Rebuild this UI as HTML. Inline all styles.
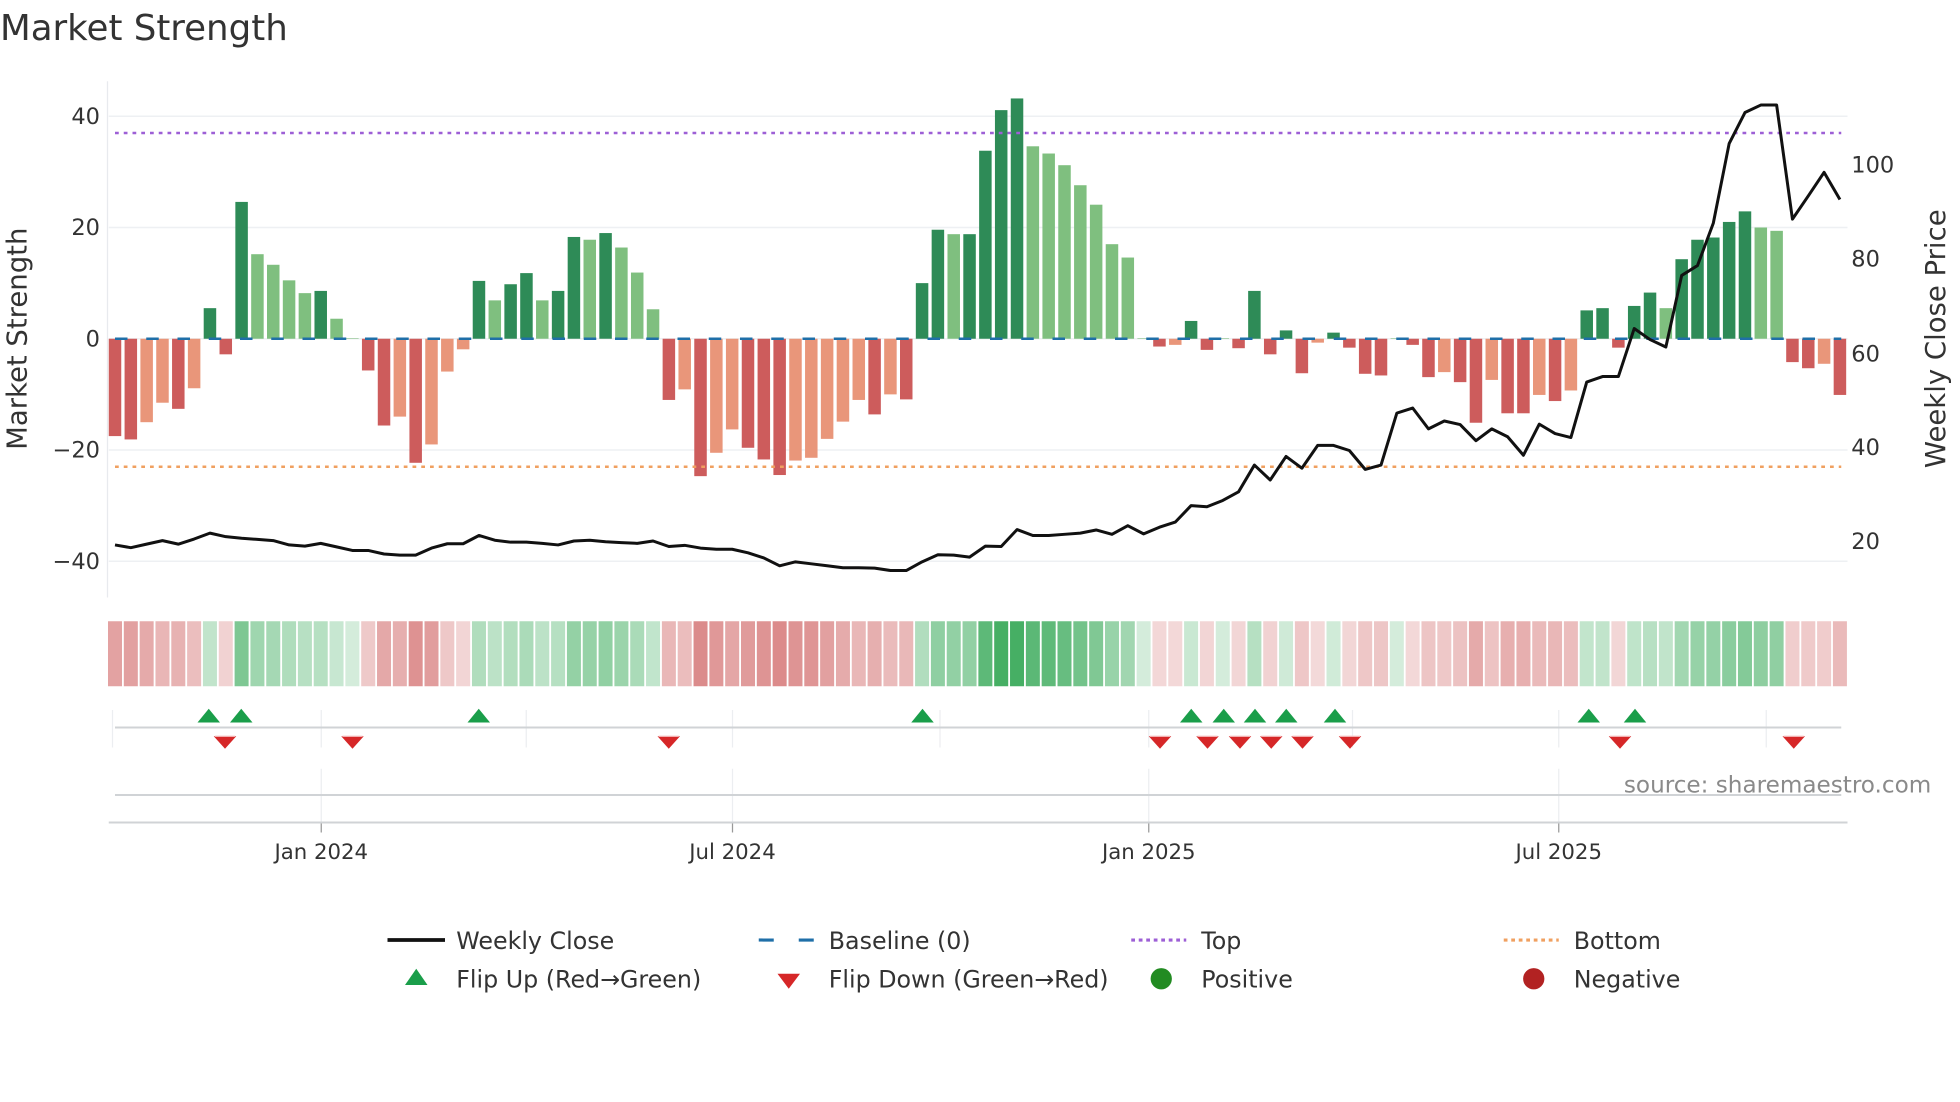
<!DOCTYPE html>
<html><head><meta charset="utf-8"><style>
html,body{margin:0;padding:0;background:#fff;}
svg{display:block;font-family:"DejaVu Sans","Liberation Sans",sans-serif;}
</style></head><body>
<svg id="s" width="1960" height="1102" viewBox="0 0 1568 881.6" xmlns="http://www.w3.org/2000/svg">
<text x="0" y="32" font-size="28.5" fill="#333">Market Strength</text>
<g id="g"></g>
</svg>
<script>
const V=[-17.5,-18.1,-15,-11.5,-12.6,-8.9,5.5,-2.8,24.6,15.2,13.3,10.5,8.2,8.6,3.6,0.1,-5.7,-15.6,-14,-22.3,-19,-5.9,-1.9,10.4,6.9,9.8,11.8,6.9,8.6,18.3,17.8,19,16.4,11.9,5.3,-11,-9.1,-24.7,-20.5,-16.3,-19.6,-21.7,-24.5,-21.9,-21.4,-18,-14.9,-11,-13.6,-10,-10.9,10,19.6,18.8,18.8,33.8,41.1,43.2,34.6,33.3,31.2,27.6,24.1,17,14.6,0.1,-1.4,-1.1,3.2,-2,0.1,-1.7,8.6,-2.8,1.5,-6.2,-0.7,1.1,-1.6,-6.3,-6.6,0.1,-1.1,-6.9,-6,-7.8,-15.1,-7.4,-13.4,-13.4,-10.1,-11.2,-9.3,5.1,5.5,-1.6,5.9,8.3,5.5,14.3,17.8,18.2,21,22.9,20,19.4,-4.2,-5.3,-4.5,-10.1];
const DK=[1,1,0,0,1,0,1,1,1,0,0,0,0,1,0,0,1,1,0,1,0,0,0,1,0,1,1,0,1,1,0,1,0,0,0,1,0,1,0,0,1,1,1,0,0,0,0,0,1,0,1,1,1,0,1,1,1,1,0,0,0,0,0,0,0,0,1,0,1,1,0,1,1,1,1,1,0,1,1,1,1,0,1,1,0,1,1,0,1,1,0,1,0,1,1,1,1,1,0,1,1,1,1,1,0,0,1,1,0,1];
const P1=[1385,1392,1383,1374,1383,1370,1355,1364,1368,1371,1374,1385,1388,1381,1390,1399,1399,1408,1411,1411,1393,1382,1382,1361,1373,1378,1378,1381,1385,1375,1373,1377,1379,1381,1375,1389,1386,1393,1396,1396,1405,1418,1438,1428,1433,1438,1443,1443,1444,1450,1450,1428,1410,1411,1416];
const P2=[1388,1389,1346,1361,1361,1358,1355,1347,1358,1336,1357,1340,1327,1285,1288,1272,1250,1182,1220,1160,1190,1132,1132,1145,1193,1182,1050,1037,1090,1070,1079,1120,1090,1110,1157,1078,1102,1112,971,957,957,835,863,882,700,675,567,365,286,267,267,557,498,438,507];
const P=P1.concat(P2).map(y=>y/3.177);
const X=i=>92+i*12.66;
const Y=v=>271-v*4.45;
let h='';
[40,20,0,-20,-40].forEach(v=>{h+=`<line x1="87" x2="1478" y1="${Y(v)}" y2="${Y(v)}" stroke="#eef0f3" stroke-width="1.2"/>`;
h+=`<text x="80" y="${Y(v)+6}" font-size="18" fill="#333" text-anchor="end">${v<0?'−'+(-v):v}</text>`;});
h+=`<line x1="86" x2="86" y1="65" y2="478" stroke="#e8eaee" stroke-width="1"/>`;
[[100,132],[80,207],[60,283],[40,358],[20,433]].forEach(a=>{h+=`<text x="1481" y="${a[1]+6}" font-size="18" fill="#333">${a[0]}</text>`;});
V.forEach((v,i)=>{const x=X(i)-5;let c;
 if(v>=0)c=DK[i]?'#2e8b57':'#7fbf7f';else c=DK[i]?'#cd5c5c':'#e9967a';
 const y0=Y(0),y1=Y(v);h+=`<rect x="${x}" y="${Math.min(y0,y1)}" width="10" height="${Math.abs(y1-y0)}" fill="${c}"/>`;});
h+=`<line x1="92" x2="1473" y1="${Y(0)}" y2="${Y(0)}" stroke="#1f6fa8" stroke-width="2" stroke-dasharray="10,15"/>`;
h+=`<line x1="92" x2="1473" y1="${Y(37)}" y2="${Y(37)}" stroke="#9d5fd6" stroke-width="2" stroke-dasharray="3,4"/>`;
h+=`<line x1="92" x2="1473" y1="${Y(-23)}" y2="${Y(-23)}" stroke="#f0a060" stroke-width="2" stroke-dasharray="3,4"/>`;
h+=`<polyline fill="none" stroke="#111" stroke-width="2.4" stroke-linejoin="round" points="${P.map((y,i)=>X(i)+','+y).join(' ')}"/>`;
V.forEach((v,i)=>{const a=Math.abs(v);let r,g,b,al;
 if(v>=0){[r,g,b]=[60,171,92];al=Math.min(0.95,0.22+0.018*a);}else{[r,g,b]=[205,92,92];al=Math.min(0.8,0.22+0.02*a);}
 const m=c=>Math.round(c*al+255*(1-al));
 h+=`<rect x="${X(i)-5.6}" y="497" width="11.2" height="52" fill="rgb(${m(r)},${m(g)},${m(b)})"/>`;});
[90,257,421,586,752,919,1082,1247,1413].forEach(x=>{h+=`<line x1="${x}" x2="${x}" y1="568" y2="598" stroke="#eceef1"/>`;});
h+=`<line x1="92" x2="1473" y1="582" y2="582" stroke="#d0d3d6" stroke-width="1.6"/>`;
[167,193,383,738,953,979,1004,1029,1068,1271,1308].forEach(x=>{h+=`<polygon points="${x-9},578 ${x+9},578 ${x},567" fill="#1a9e4a"/>`;});
[180,282,535,928,966,992,1017,1042,1080,1296,1435].forEach(x=>{h+=`<polygon points="${x-9},589 ${x+9},589 ${x},599" fill="#d62728"/><line x1="${x-8}" x2="${x+8}" y1="589" y2="589" stroke="#f6c4c4" stroke-width="1"/>`;});
[257,586,919,1247].forEach(x=>{h+=`<line x1="${x}" x2="${x}" y1="615" y2="658" stroke="#eceef1"/><line x1="${x}" x2="${x}" y1="658" y2="666" stroke="#999"/>`;});
h+=`<line x1="92" x2="1473" y1="636" y2="636" stroke="#d0d3d6" stroke-width="1.6"/>`;
h+=`<line x1="87" x2="1478" y1="658" y2="658" stroke="#d0d3d6" stroke-width="1.6"/>`;
h+=`<text x="1545" y="634" font-size="18.5" fill="#8a8a8a" text-anchor="end">source: sharemaestro.com</text>`;
[['Jan 2024',257],['Jul 2024',586],['Jan 2025',919],['Jul 2025',1247]].forEach(a=>{h+=`<text x="${a[1]}" y="687" font-size="17" fill="#333" text-anchor="middle">${a[0]}</text>`;});
h+=`<text transform="translate(21,271) rotate(-90)" font-size="22" fill="#333" text-anchor="middle">Market Strength</text>`;
h+=`<text transform="translate(1556,271) rotate(-90)" font-size="22" fill="#333" text-anchor="middle">Weekly Close Price</text>`;
const T=(x,y,s)=>`<text x="${x}" y="${y+7}" font-size="19" fill="#333">${s}</text>`;
h+=`<line x1="310" x2="356" y1="752" y2="752" stroke="#111" stroke-width="3"/>`+T(365,752,'Weekly Close');
h+=`<line x1="607" x2="651" y1="752" y2="752" stroke="#1f6fa8" stroke-width="2.5" stroke-dasharray="12,20"/>`+T(663,752,'Baseline (0)');
h+=`<line x1="905" x2="949" y1="752" y2="752" stroke="#9d5fd6" stroke-width="2.5" stroke-dasharray="3,3"/>`+T(961,752,'Top');
h+=`<line x1="1203" x2="1247" y1="752" y2="752" stroke="#f0a060" stroke-width="2.5" stroke-dasharray="3,3"/>`+T(1259,752,'Bottom');
h+=`<polygon points="324,788 342,788 333,775" fill="#1a9e4a"/>`+T(365,783,'Flip Up (Red→Green)');
h+=`<polygon points="622,779 640,779 631,791" fill="#d62728"/>`+T(663,783,'Flip Down (Green→Red)');
h+=`<circle cx="929" cy="783" r="8.5" fill="#228b22"/>`+T(961,783,'Positive');
h+=`<circle cx="1227" cy="783" r="8.5" fill="#b22222"/>`+T(1259,783,'Negative');
document.getElementById('g').innerHTML=h;
</script>
</body></html>
